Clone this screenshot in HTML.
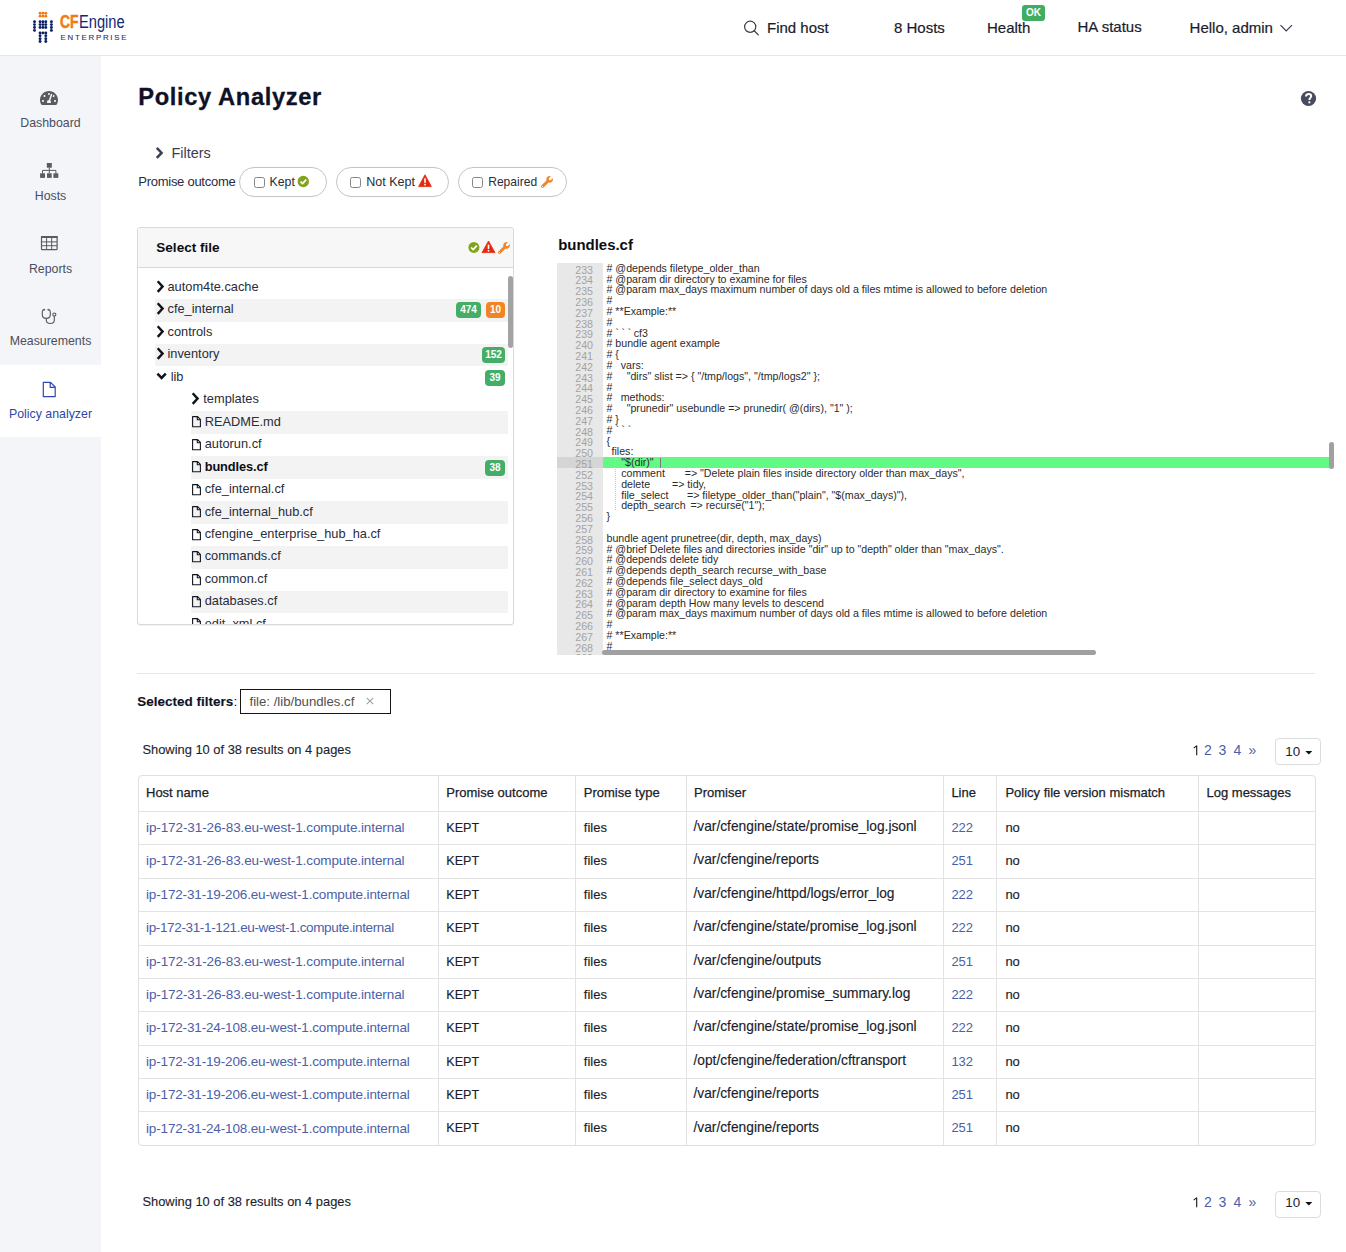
<!DOCTYPE html>
<html><head><meta charset="utf-8">
<style>
*{box-sizing:border-box;margin:0;padding:0}
html,body{width:1346px;height:1252px;overflow:hidden;background:#fff;font-family:"Liberation Sans",sans-serif;color:#1b1d2b}
.abs{position:absolute}
.t{position:absolute;line-height:1;white-space:pre}
.nav{color:#1a1c2c;-webkit-text-stroke:0.2px #1a1c2c}
.sl{color:#4b4e5e;width:101px;left:0!important;text-align:center}
.pill{position:absolute;top:167px;height:29.6px;border:1px solid #c4c4c4;border-radius:15px;background:#fff}
.cb{position:absolute;top:177px;width:11px;height:11px;border:1.2px solid #858585;border-radius:2.5px;background:#fff}
.row{position:absolute;height:22.46px}
.stripe{background:#f3f3f3}
.badge{position:absolute;height:16px;border-radius:4px;color:#fff;font-size:10px;font-weight:bold;text-align:center;line-height:16px}
.g{background:#44ae68}.o{background:#f28422}
.code .ln{position:absolute;width:36px;left:557px;text-align:right;color:#a3a3a3;font-size:10.64px;line-height:1;white-space:pre}
.code .cl{position:absolute;left:606.5px;color:#2b2b2b;font-size:10.64px;line-height:1;white-space:pre}
.th{color:#1b1d2b;-webkit-text-stroke:0.25px #1b1d2b}
.lnk{color:#4b5ea8}
.td{color:#1b1d2b;-webkit-text-stroke:0.15px #1b1d2b}
.vl{position:absolute;top:775px;width:1px;height:370px;background:#e3e3e3}
.hl{position:absolute;left:138px;width:1177px;height:1px;background:#e3e3e3}
</style></head><body>

<div class="abs" style="left:0;top:0;width:1346px;height:56px;background:#fff;border-bottom:1px solid #e3e6ed"></div>
<svg class="abs" style="left:0;top:0" width="60" height="50"><circle cx="40.06" cy="13.27" r="1.45" fill="#f37a12"/><circle cx="42.94" cy="13.27" r="1.45" fill="#f37a12"/><circle cx="45.8" cy="13.27" r="1.45" fill="#f37a12"/><circle cx="40.06" cy="16.15" r="1.45" fill="#f37a12"/><circle cx="42.94" cy="16.15" r="1.45" fill="#f37a12"/><circle cx="45.8" cy="16.15" r="1.45" fill="#f37a12"/><circle cx="40.06" cy="21.7" r="1.45" fill="#0b1f66"/><circle cx="42.94" cy="21.7" r="1.45" fill="#0b1f66"/><circle cx="45.8" cy="21.7" r="1.45" fill="#0b1f66"/><circle cx="40.06" cy="24.6" r="1.45" fill="#0b1f66"/><circle cx="42.94" cy="24.6" r="1.45" fill="#0b1f66"/><circle cx="45.8" cy="24.6" r="1.45" fill="#0b1f66"/><circle cx="40.06" cy="27.5" r="1.45" fill="#0b1f66"/><circle cx="42.94" cy="27.5" r="1.45" fill="#0b1f66"/><circle cx="45.8" cy="27.5" r="1.45" fill="#0b1f66"/><circle cx="34.5" cy="21.7" r="1.45" fill="#0b1f66"/><circle cx="51.4" cy="21.7" r="1.45" fill="#0b1f66"/><circle cx="34.5" cy="24.6" r="1.45" fill="#0b1f66"/><circle cx="51.4" cy="24.6" r="1.45" fill="#0b1f66"/><circle cx="34.5" cy="27.5" r="1.45" fill="#0b1f66"/><circle cx="51.4" cy="27.5" r="1.45" fill="#0b1f66"/><circle cx="34.5" cy="30.4" r="1.45" fill="#0b1f66"/><circle cx="51.4" cy="30.4" r="1.45" fill="#0b1f66"/><circle cx="40.06" cy="32.9" r="1.45" fill="#0b1f66"/><circle cx="42.94" cy="32.9" r="1.45" fill="#0b1f66"/><circle cx="45.8" cy="32.9" r="1.45" fill="#0b1f66"/><circle cx="40.06" cy="35.8" r="1.45" fill="#0b1f66"/><circle cx="45.8" cy="35.8" r="1.45" fill="#0b1f66"/><circle cx="40.06" cy="38.7" r="1.45" fill="#0b1f66"/><circle cx="45.8" cy="38.7" r="1.45" fill="#0b1f66"/><circle cx="40.06" cy="41.5" r="1.45" fill="#0b1f66"/><circle cx="45.8" cy="41.5" r="1.45" fill="#0b1f66"/></svg>
<div class="t" style="left:60px;top:13.4px;font-size:18px;color:#f37a12;font-weight:bold;-webkit-text-stroke:0.5px #f37a12;transform:scaleX(0.77);transform-origin:0 0">CF</div>
<div class="t" style="left:79.3px;top:13.4px;font-size:18px;color:#112a74;transform:scaleX(0.815);transform-origin:0 0">Engine</div>
<div class="t" style="left:60.6px;top:33.6px;font-size:7.8px;color:#1b2f72;-webkit-text-stroke:0.1px #1b2f72;letter-spacing:1.78px">ENTERPRISE</div>
<svg class="abs" style="left:743px;top:20px" width="17" height="16" viewBox="0 0 17 16"><circle cx="7.2" cy="6.8" r="5.6" fill="none" stroke="#3a3c4a" stroke-width="1.2"/><line x1="11.2" y1="10.8" x2="15.3" y2="14.9" stroke="#3a3c4a" stroke-width="1.3" stroke-linecap="round"/></svg>
<div class="t nav" style="left:767px;top:19.70px;font-size:15px;">Find host</div>
<div class="t nav" style="left:894px;top:19.70px;font-size:15px;">8 Hosts</div>
<div class="t nav" style="left:987px;top:19.70px;font-size:15px;">Health</div>
<div class="abs" style="left:1022px;top:5px;width:23px;height:16px;background:#3fae63;border-radius:3px;color:#fff;font-size:10px;font-weight:bold;text-align:center;line-height:16px">OK</div>
<div class="t nav" style="left:1077.5px;top:18.90px;font-size:15px;">HA status</div>
<div class="t nav" style="left:1189.6px;top:19.90px;font-size:15px;">Hello, admin</div>
<svg class="abs" style="left:1279px;top:23px" width="15" height="11" viewBox="0 0 15 11"><polyline points="1.5,2.2 7.2,8 13,2.2" fill="none" stroke="#3a3c4a" stroke-width="1.2"/></svg>
<div class="abs" style="left:0;top:56px;width:101px;height:1196px;background:#f3f5f9"></div>
<div class="abs" style="left:0;top:365px;width:101px;height:72px;background:#fff"></div>
<svg class="abs" style="left:40px;top:91px" width="18" height="14" viewBox="0 32 576 448">
<path fill="#5b5b5f" d="M288 32C128.94 32 0 160.94 0 320c0 52.8 14.25 102.26 39.06 144.8 5.61 9.62 16.3 15.2 27.44 15.2h443c11.14 0 21.83-5.58 27.44-15.2C561.75 422.26 576 372.8 576 320c0-159.06-128.94-288-288-288zm0 64c14.71 0 26.58 10.13 30.32 23.650-1.11 2.26-2.640 4.23-3.450 6.67l-9.22 27.67c-5.13 3.49-10.97 6.01-17.64 6.01-17.67 0-32-14.33-32-32S270.33 96 288 96zM96 384c-17.67 0-32-14.33-32-32s14.33-32 32-32 32 14.33 32 32-14.33 32-32 32zm48-160c-17.67 0-32-14.33-32-32s14.33-32 32-32 32 14.33 32 32-14.33 32-32 32zm246.77-72.41l-61.33 184C343.13 347.33 352 364.54 352 384c0 11.72-3.380 22.55-8.880 32H232.88c-5.5-9.45-8.88-20.28-8.88-32 0-33.94 26.5-61.43 59.9-63.59l61.34-184.01c4.17-12.56 17.73-19.45 30.36-15.170 12.57 4.19 19.35 17.79 15.17 30.36zm14.66 57.2l15.52-46.55c3.47-1.29 7.13-2.23 11.05-2.23 17.67 0 32 14.33 32 32s-14.33 32-32 32c-11.38-.01-20.89-6.27-26.57-15.22zM480 384c-17.67 0-32-14.33-32-32s14.33-32 32-32 32 14.33 32 32-14.33 32-32 32z"/>
</svg>
<div class="t sl" style="left:0px;top:116.85px;font-size:12.35px;">Dashboard</div>
<svg class="abs" style="left:39px;top:162px" width="21" height="17" viewBox="0 0 21 17">
<rect x="7.8" y="1" width="5" height="4.7" fill="#5b5b5f"/>
<rect x="1.1" y="11.3" width="4.9" height="4.6" fill="#5b5b5f"/><rect x="8" y="11.3" width="4.7" height="4.6" fill="#5b5b5f"/><rect x="14.4" y="11.3" width="4.9" height="4.6" fill="#5b5b5f"/>
<path d="M10.3,5.5 V11.5 M3.5,11.5 V8.4 H16.9 V11.5" fill="none" stroke="#5b5b5f" stroke-width="1"/>
</svg>
<div class="t sl" style="left:0px;top:189.95px;font-size:12.35px;">Hosts</div>
<svg class="abs" style="left:40px;top:235px" width="19" height="16" viewBox="0 0 19 16">
<rect x="1.5" y="1.5" width="15.6" height="13.2" rx="0.8" fill="none" stroke="#5b5b5f" stroke-width="1.2"/>
<rect x="1" y="1" width="16.6" height="2" fill="#5b5b5f"/>
<path d="M6.6,2 V14.5 M11.7,2 V14.5 M1.5,6.9 H17 M1.5,10.7 H17" stroke="#5b5b5f" stroke-width="1"/>
</svg>
<div class="t sl" style="left:0px;top:262.65px;font-size:12.35px;">Reports</div>
<svg class="abs" style="left:40px;top:308px" width="19" height="18" viewBox="0 0 19 18">
<path d="M4.2,1.6 Q2.3,1.8 2.3,3.8 V6.8 Q2.3,10.4 6.3,10.4 Q10.3,10.4 10.3,6.8 V3.8 Q10.3,1.8 8.4,1.6" fill="none" stroke="#5b5b5f" stroke-width="1.15"/>
<circle cx="4.3" cy="1.7" r="0.9" fill="#5b5b5f"/><circle cx="8.3" cy="1.7" r="0.9" fill="#5b5b5f"/>
<path d="M6.3,10.4 V12.3 Q6.3,15.5 10.3,15.5 Q14.3,15.5 14.3,12.3 V8.1" fill="none" stroke="#5b5b5f" stroke-width="1.15"/>
<circle cx="14.3" cy="6.5" r="1.55" fill="none" stroke="#5b5b5f" stroke-width="1.15"/>
</svg>
<div class="t sl" style="left:0px;top:335.45px;font-size:12.35px;">Measurements</div>
<svg class="abs" style="left:42px;top:381px" width="15" height="17" viewBox="0 0 15 17">
<path d="M1.3,1.3 H8.5 L13.2,6 V15.6 H1.3 Z M8.2,1.3 V6.3 H13.2" fill="none" stroke="#2f48ad" stroke-width="1.2" stroke-linejoin="round"/>
</svg>
<div class="t sl" style="left:0px;top:408.45px;font-size:12.35px;color:#2d47ab">Policy analyzer</div>
<div class="t" style="left:138.3px;top:85.94px;font-size:23.7px;font-weight:bold;color:#0f1226;letter-spacing:0.62px;-webkit-text-stroke:0.3px #0f1226">Policy Analyzer</div>
<svg class="abs" style="left:1300px;top:90px" width="17" height="17" viewBox="0 0 17 17">
<circle cx="8.5" cy="8.5" r="7.6" fill="#474b5b"/>
<path d="M6,6.5 C6,4.7 7.1,3.9 8.6,3.9 C10.2,3.9 11.2,4.8 11.2,6.1 C11.2,7.7 9.4,8 9.4,9.6 V10.1" fill="none" stroke="#fff" stroke-width="2"/>
<rect x="8.4" y="11.3" width="1.9" height="2" fill="#fff"/>
</svg>
<svg class="abs" style="left:154px;top:146px" width="11" height="14" viewBox="0 0 11 14"><polyline points="2.8,1.9 7.6,6.9 2.8,11.9" fill="none" stroke="#3c4050" stroke-width="2.5"/></svg>
<div class="t" style="left:171.5px;top:145.81px;font-size:14.4px;color:#3a3d4e">Filters</div>
<div class="t" style="left:138.3px;top:174.80px;font-size:13px;color:#2a2c3c;letter-spacing:-0.27px">Promise outcome</div>
<div class="pill" style="left:239px;width:88px"></div>
<div class="cb" style="left:254px"></div>
<div class="t" style="left:269.5px;top:176.09px;font-size:12.3px;color:#2a2c3c">Kept</div>
<svg class="abs" style="left:297px;top:175px" width="13" height="13" viewBox="0 0 13 13"><circle cx="6.3" cy="6.5" r="5.7" fill="#80a51a"/><polyline points="3.5,6.6 5.6,8.6 9.2,4.7" fill="none" stroke="#fff" stroke-width="1.7"/></svg>
<div class="pill" style="left:336px;width:113px"></div>
<div class="cb" style="left:350px"></div>
<div class="t" style="left:366.2px;top:175.88px;font-size:12.55px;color:#2a2c3c">Not Kept</div>
<svg class="abs" style="left:418px;top:174px" width="14" height="14" viewBox="0 0 14 14"><path d="M7,0.8 L13.4,12.6 H0.6 Z" fill="#e5290f" stroke="#e5290f" stroke-width="0.8" stroke-linejoin="round"/><rect x="6.2" y="4.3" width="1.6" height="4.5" fill="#fff"/><rect x="6.2" y="9.8" width="1.6" height="1.6" fill="#fff"/></svg>
<div class="pill" style="left:458px;width:109px"></div>
<div class="cb" style="left:472px"></div>
<div class="t" style="left:488.2px;top:176.30px;font-size:12.05px;color:#2a2c3c">Repaired</div>
<svg class="abs" style="left:541px;top:175.7px" width="12" height="12" viewBox="0 0 512 512"><path fill="#f0862a" d="M507.73 109.1c-2.24-9.03-13.54-12.09-20.12-5.51l-74.36 74.360-67.88-11.310-11.310-67.88 74.36-74.36c6.62-6.62 3.43-17.9-5.66-20.16-47.38-11.74-99.55.91-136.58 37.93-39.64 39.640-50.55 97.1-34.05 147.2L18.74 402.76c-24.99 24.99-24.99 65.51 0 90.5 24.99 24.99 65.51 24.99 90.5 0l213.21-213.21c50.12 16.71 107.47 5.68 147.37-34.22 37.07-37.07 49.7-89.32 37.91-136.73zM64 472c-13.25 0-24-10.75-24-24 0-13.26 10.75-24 24-24s24 10.74 24 24c0 13.25-10.75 24-24 24z"/></svg>
<div class="abs" style="left:137px;top:227px;width:377px;height:398px;border:1px solid #d9d9d9;border-radius:3px;background:#fff;box-shadow:0 1px 1px rgba(0,0,0,0.06)"></div>
<div class="abs" style="left:138px;top:228px;width:375px;height:40px;background:#f7f7f7;border-bottom:1px solid #d9d9d9;border-radius:3px 3px 0 0"></div>
<div class="t" style="left:156.3px;top:240.53px;font-size:13.55px;font-weight:bold;color:#0d0d12">Select file</div>
<svg class="abs" style="left:467px;top:241px" width="13" height="13" viewBox="0 0 13 13"><circle cx="6.9" cy="6.4" r="5.5" fill="#80a51a"/><polyline points="4.1,6.5 6.2,8.5 9.8,4.6" fill="none" stroke="#fff" stroke-width="1.7"/></svg>
<svg class="abs" style="left:481px;top:240px" width="15" height="14" viewBox="0 0 15 14"><path d="M7.5,1 L14,12.6 H1 Z" fill="#e5290f" stroke="#e5290f" stroke-width="0.8" stroke-linejoin="round"/><rect x="6.7" y="4.6" width="1.6" height="4.3" fill="#fff"/><rect x="6.7" y="9.9" width="1.6" height="1.6" fill="#fff"/></svg>
<svg class="abs" style="left:497.5px;top:241.5px" width="12" height="12" viewBox="0 0 512 512"><path fill="#f0862a" d="M507.73 109.1c-2.24-9.03-13.54-12.09-20.12-5.51l-74.36 74.360-67.88-11.310-11.310-67.88 74.36-74.36c6.62-6.62 3.43-17.9-5.66-20.16-47.38-11.74-99.55.91-136.58 37.93-39.64 39.640-50.55 97.1-34.05 147.2L18.74 402.76c-24.99 24.99-24.99 65.51 0 90.5 24.99 24.99 65.51 24.99 90.5 0l213.21-213.21c50.12 16.71 107.47 5.68 147.37-34.22 37.07-37.07 49.7-89.32 37.91-136.73zM64 472c-13.25 0-24-10.75-24-24 0-13.26 10.75-24 24-24s24 10.74 24 24c0 13.25-10.75 24-24 24z"/></svg>
<div class="abs" style="left:138px;top:269px;width:375px;height:355px;overflow:hidden">
<svg class="abs" style="left:17.5px;top:10.85px" width="9" height="14" viewBox="0 0 9 14"><polyline points="1.7,1.3 6.6,6.6 1.7,11.9" fill="none" stroke="#10121c" stroke-width="2.4"/></svg>
<div class="t" style="left:29.5px;top:12.01px;font-size:12.8px;color:#2a2c38">autom4te.cache</div>
<div class="abs stripe" style="left:17.19999999999999px;top:30.00px;width:352.8px;height:22.6px"></div>
<svg class="abs" style="left:17.5px;top:33.30px" width="9" height="14" viewBox="0 0 9 14"><polyline points="1.7,1.3 6.6,6.6 1.7,11.9" fill="none" stroke="#10121c" stroke-width="2.4"/></svg>
<div class="t" style="left:29.5px;top:34.46px;font-size:12.8px;color:#2a2c38">cfe_internal</div>
<div class="badge g" style="left:318px;top:33.40px;width:25px">474</div>
<div class="badge o" style="left:348px;top:33.40px;width:19px">10</div>
<svg class="abs" style="left:17.5px;top:55.75px" width="9" height="14" viewBox="0 0 9 14"><polyline points="1.7,1.3 6.6,6.6 1.7,11.9" fill="none" stroke="#10121c" stroke-width="2.4"/></svg>
<div class="t" style="left:29.5px;top:56.91px;font-size:12.8px;color:#2a2c38">controls</div>
<div class="abs stripe" style="left:17.19999999999999px;top:74.90px;width:352.8px;height:22.6px"></div>
<svg class="abs" style="left:17.5px;top:78.20px" width="9" height="14" viewBox="0 0 9 14"><polyline points="1.7,1.3 6.6,6.6 1.7,11.9" fill="none" stroke="#10121c" stroke-width="2.4"/></svg>
<div class="t" style="left:29.5px;top:79.36px;font-size:12.8px;color:#2a2c38">inventory</div>
<div class="badge g" style="left:344px;top:78.30px;width:23px">152</div>
<svg class="abs" style="left:18px;top:103.45px" width="12" height="9" viewBox="0 0 12 9"><polyline points="1.4,1.6 5.6,5.9 9.8,1.6" fill="none" stroke="#10121c" stroke-width="2.5"/></svg>
<div class="t" style="left:32.69999999999999px;top:101.81px;font-size:12.8px;color:#2a2c38">lib</div>
<div class="badge g" style="left:347px;top:100.75px;width:20px">39</div>
<svg class="abs" style="left:53.30000000000001px;top:123.10px" width="9" height="14" viewBox="0 0 9 14"><polyline points="1.7,1.3 6.6,6.6 1.7,11.9" fill="none" stroke="#10121c" stroke-width="2.4"/></svg>
<div class="t" style="left:65.30000000000001px;top:124.26px;font-size:12.8px;color:#2a2c38">templates</div>
<div class="abs stripe" style="left:53px;top:142.25px;width:317px;height:22.6px"></div>
<svg class="abs" style="left:53.80000000000001px;top:147.35px" width="10" height="12" viewBox="0 0 10 12"><path d="M0.6,0.6 H5.6 L8.4,3.4 V10.8 H0.6 Z M5.3,0.6 V3.7 H8.4" fill="none" stroke="#14161f" stroke-width="1.1" stroke-linejoin="round"/></svg>
<div class="t" style="left:66.69999999999999px;top:146.71px;font-size:12.8px;color:#2a2c38">README.md</div>
<svg class="abs" style="left:53.80000000000001px;top:169.80px" width="10" height="12" viewBox="0 0 10 12"><path d="M0.6,0.6 H5.6 L8.4,3.4 V10.8 H0.6 Z M5.3,0.6 V3.7 H8.4" fill="none" stroke="#14161f" stroke-width="1.1" stroke-linejoin="round"/></svg>
<div class="t" style="left:66.69999999999999px;top:169.16px;font-size:12.8px;color:#2a2c38">autorun.cf</div>
<div class="abs stripe" style="left:53px;top:187.15px;width:317px;height:22.6px"></div>
<svg class="abs" style="left:53.80000000000001px;top:192.25px" width="10" height="12" viewBox="0 0 10 12"><path d="M0.6,0.6 H5.6 L8.4,3.4 V10.8 H0.6 Z M5.3,0.6 V3.7 H8.4" fill="none" stroke="#14161f" stroke-width="1.1" stroke-linejoin="round"/></svg>
<div class="t" style="left:66.69999999999999px;top:191.61px;font-size:12.8px;font-weight:bold;color:#0d0d12;letter-spacing:-0.1px">bundles.cf</div>
<div class="badge g" style="left:347px;top:190.55px;width:20px">38</div>
<svg class="abs" style="left:53.80000000000001px;top:214.70px" width="10" height="12" viewBox="0 0 10 12"><path d="M0.6,0.6 H5.6 L8.4,3.4 V10.8 H0.6 Z M5.3,0.6 V3.7 H8.4" fill="none" stroke="#14161f" stroke-width="1.1" stroke-linejoin="round"/></svg>
<div class="t" style="left:66.69999999999999px;top:214.06px;font-size:12.8px;color:#2a2c38">cfe_internal.cf</div>
<div class="abs stripe" style="left:53px;top:232.05px;width:317px;height:22.6px"></div>
<svg class="abs" style="left:53.80000000000001px;top:237.15px" width="10" height="12" viewBox="0 0 10 12"><path d="M0.6,0.6 H5.6 L8.4,3.4 V10.8 H0.6 Z M5.3,0.6 V3.7 H8.4" fill="none" stroke="#14161f" stroke-width="1.1" stroke-linejoin="round"/></svg>
<div class="t" style="left:66.69999999999999px;top:236.51px;font-size:12.8px;color:#2a2c38">cfe_internal_hub.cf</div>
<svg class="abs" style="left:53.80000000000001px;top:259.60px" width="10" height="12" viewBox="0 0 10 12"><path d="M0.6,0.6 H5.6 L8.4,3.4 V10.8 H0.6 Z M5.3,0.6 V3.7 H8.4" fill="none" stroke="#14161f" stroke-width="1.1" stroke-linejoin="round"/></svg>
<div class="t" style="left:66.69999999999999px;top:258.96px;font-size:12.8px;color:#2a2c38">cfengine_enterprise_hub_ha.cf</div>
<div class="abs stripe" style="left:53px;top:276.95px;width:317px;height:22.6px"></div>
<svg class="abs" style="left:53.80000000000001px;top:282.05px" width="10" height="12" viewBox="0 0 10 12"><path d="M0.6,0.6 H5.6 L8.4,3.4 V10.8 H0.6 Z M5.3,0.6 V3.7 H8.4" fill="none" stroke="#14161f" stroke-width="1.1" stroke-linejoin="round"/></svg>
<div class="t" style="left:66.69999999999999px;top:281.41px;font-size:12.8px;color:#2a2c38">commands.cf</div>
<svg class="abs" style="left:53.80000000000001px;top:304.50px" width="10" height="12" viewBox="0 0 10 12"><path d="M0.6,0.6 H5.6 L8.4,3.4 V10.8 H0.6 Z M5.3,0.6 V3.7 H8.4" fill="none" stroke="#14161f" stroke-width="1.1" stroke-linejoin="round"/></svg>
<div class="t" style="left:66.69999999999999px;top:303.86px;font-size:12.8px;color:#2a2c38">common.cf</div>
<div class="abs stripe" style="left:53px;top:321.85px;width:317px;height:22.6px"></div>
<svg class="abs" style="left:53.80000000000001px;top:326.95px" width="10" height="12" viewBox="0 0 10 12"><path d="M0.6,0.6 H5.6 L8.4,3.4 V10.8 H0.6 Z M5.3,0.6 V3.7 H8.4" fill="none" stroke="#14161f" stroke-width="1.1" stroke-linejoin="round"/></svg>
<div class="t" style="left:66.69999999999999px;top:326.31px;font-size:12.8px;color:#2a2c38">databases.cf</div>
<svg class="abs" style="left:53.80000000000001px;top:349.40px" width="10" height="12" viewBox="0 0 10 12"><path d="M0.6,0.6 H5.6 L8.4,3.4 V10.8 H0.6 Z M5.3,0.6 V3.7 H8.4" fill="none" stroke="#14161f" stroke-width="1.1" stroke-linejoin="round"/></svg>
<div class="t" style="left:66.69999999999999px;top:348.76px;font-size:12.8px;color:#2a2c38">edit_xml.cf</div>
<div class="abs" style="left:370px;top:7px;width:4.5px;height:72px;border-radius:3px;background:#a3a3a3"></div>
</div>
<div class="t" style="left:558.2px;top:237.94px;font-size:14.95px;font-weight:bold;color:#0d0d12">bundles.cf</div>
<div class="abs code" style="left:0;top:0;width:1346px;height:1252px;overflow:hidden;clip-path:inset(263px 11px 597px 557px)">
<div class="abs" style="left:557px;top:263px;width:46px;height:392px;background:#e8e8e8"></div>
<div class="abs" style="left:557px;top:457.2px;width:46px;height:10.6px;background:#d5d5d5"></div>
<div class="abs" style="left:603px;top:457.2px;width:727px;height:10.6px;background:#62f985"></div>
<div class="ln" style="top:264.59px">233</div>
<div class="cl" style="top:262.79px"># @depends filetype_older_than</div>
<div class="ln" style="top:275.39px">234</div>
<div class="cl" style="top:273.59px"># @param dir directory to examine for files</div>
<div class="ln" style="top:286.19px">235</div>
<div class="cl" style="top:284.39px"># @param max_days maximum number of days old a files mtime is allowed to before deletion</div>
<div class="ln" style="top:296.99px">236</div>
<div class="cl" style="top:295.19px">#</div>
<div class="ln" style="top:307.79px">237</div>
<div class="cl" style="top:305.99px"># **Example:**</div>
<div class="ln" style="top:318.59px">238</div>
<div class="cl" style="top:316.79px">#</div>
<div class="ln" style="top:329.39px">239</div>
<div class="cl" style="top:327.59px"># <span style="letter-spacing:2.6px">```</span>cf3</div>
<div class="ln" style="top:340.19px">240</div>
<div class="cl" style="top:338.39px"># bundle agent example</div>
<div class="ln" style="top:350.99px">241</div>
<div class="cl" style="top:349.19px"># {</div>
<div class="ln" style="top:361.79px">242</div>
<div class="cl" style="top:359.99px">#</div><div class="cl" style="left:620.7px;top:359.99px">vars:</div>
<div class="ln" style="top:372.59px">243</div>
<div class="cl" style="top:370.79px">#</div><div class="cl" style="left:626.7px;top:370.79px">&quot;dirs&quot; slist =&gt; { &quot;/tmp/logs&quot;, &quot;/tmp/logs2&quot; };</div>
<div class="ln" style="top:383.39px">244</div>
<div class="cl" style="top:381.59px">#</div>
<div class="ln" style="top:394.19px">245</div>
<div class="cl" style="top:392.39px">#</div><div class="cl" style="left:620.7px;top:392.39px">methods:</div>
<div class="ln" style="top:404.99px">246</div>
<div class="cl" style="top:403.19px">#</div><div class="cl" style="left:626.7px;top:403.19px">&quot;prunedir&quot; usebundle =&gt; prunedir( @(dirs), &quot;1&quot; );</div>
<div class="ln" style="top:415.79px">247</div>
<div class="cl" style="top:413.99px"># }</div>
<div class="ln" style="top:426.59px">248</div>
<div class="cl" style="top:424.79px"># <span style="letter-spacing:2.6px">```</span></div>
<div class="ln" style="top:437.39px">249</div>
<div class="cl" style="top:435.59px">{</div>
<div class="ln" style="top:448.19px">250</div>
<div class="cl" style="left:611.5px;top:446.39px">files:</div>
<div class="ln" style="top:458.99px">251</div>
<div class="cl" style="left:621.3px;top:457.19px">"$(dir)"</div>
<div class="abs" style="left:660px;top:457.6px;width:1px;height:10px;background:#7a7a7a"></div>
<div class="ln" style="top:469.79px">252</div>
<div class="cl" style="left:621.2px;top:467.99px">comment</div>
<div class="cl" style="left:684.7px;top:467.99px">=&gt; &quot;Delete plain files inside directory older than max_days&quot;,</div>
<div class="ln" style="top:480.59px">253</div>
<div class="cl" style="left:621.2px;top:478.79px">delete</div>
<div class="cl" style="left:672px;top:478.79px">=&gt; tidy,</div>
<div class="ln" style="top:491.39px">254</div>
<div class="cl" style="left:621.2px;top:489.59px">file_select</div>
<div class="cl" style="left:687px;top:489.59px">=&gt; filetype_older_than(&quot;plain&quot;, &quot;$(max_days)&quot;),</div>
<div class="ln" style="top:502.19px">255</div>
<div class="cl" style="left:621.2px;top:500.39px">depth_search</div>
<div class="cl" style="left:690.4px;top:500.39px">=&gt; recurse(&quot;1&quot;);</div>
<div class="ln" style="top:512.99px">256</div>
<div class="cl" style="top:511.19px">}</div>
<div class="ln" style="top:523.79px">257</div>
<div class="ln" style="top:534.59px">258</div>
<div class="cl" style="top:532.79px">bundle agent prunetree(dir, depth, max_days)</div>
<div class="ln" style="top:545.39px">259</div>
<div class="cl" style="top:543.59px"># @brief Delete files and directories inside &quot;dir&quot; up to &quot;depth&quot; older than &quot;max_days&quot;.</div>
<div class="ln" style="top:556.19px">260</div>
<div class="cl" style="top:554.39px"># @depends delete tidy</div>
<div class="ln" style="top:566.99px">261</div>
<div class="cl" style="top:565.19px"># @depends depth_search recurse_with_base</div>
<div class="ln" style="top:577.79px">262</div>
<div class="cl" style="top:575.99px"># @depends file_select days_old</div>
<div class="ln" style="top:588.59px">263</div>
<div class="cl" style="top:586.79px"># @param dir directory to examine for files</div>
<div class="ln" style="top:599.39px">264</div>
<div class="cl" style="top:597.59px"># @param depth How many levels to descend</div>
<div class="ln" style="top:610.19px">265</div>
<div class="cl" style="top:608.39px"># @param max_days maximum number of days old a files mtime is allowed to before deletion</div>
<div class="ln" style="top:620.99px">266</div>
<div class="cl" style="top:619.19px">#</div>
<div class="ln" style="top:631.79px">267</div>
<div class="cl" style="top:629.99px"># **Example:**</div>
<div class="ln" style="top:642.59px">268</div>
<div class="cl" style="top:640.79px">#</div>
<div class="ln" style="top:653.39px">269</div>
<div class="cl" style="top:651.59px">#</div>
<div class="abs" style="left:615px;top:457px;width:0;height:53px;border-left:1px dotted #c8c8c8"></div>
<div class="abs" style="left:1328.7px;top:442px;width:5px;height:27px;border-radius:3px;background:#a0a0a0"></div>
<div class="abs" style="left:602px;top:650.4px;width:494px;height:4.6px;border-radius:3px;background:#a0a0a0"></div>
</div>
<div class="abs" style="left:137px;top:673px;width:1178px;height:1px;background:#e6e6e6"></div>
<div class="t" style="left:137.3px;top:694.67px;font-size:13.5px;font-weight:bold;color:#0f1226;-webkit-text-stroke:0.1px #0f1226">Selected filters</div>
<div class="t" style="left:233.5px;top:694.67px;font-size:13.5px;color:#0f1226">:</div>
<div class="abs" style="left:240px;top:689px;width:151px;height:25px;border:1px solid #151515"></div>
<div class="t" style="left:249.5px;top:694.83px;font-size:13.2px;color:#505050">file: /lib/bundles.cf</div>
<svg class="abs" style="left:365.5px;top:697px" width="8" height="8" viewBox="0 0 8 8"><path d="M0.8,0.8 L7.2,7.2 M7.2,0.8 L0.8,7.2" stroke="#a0a0a0" stroke-width="1.1"/></svg>
<div class="t" style="left:142.4px;top:743.78px;font-size:12.9px;color:#1b1d2b;-webkit-text-stroke:0.1px #1b1d2b">Showing 10 of 38 results on 4 pages</div>
<svg class="abs" style="left:1192.5px;top:744.80px" width="6" height="11" viewBox="0 0 6 11"><path d="M3.7,0.4 V10.2 M3.8,0.6 L0.7,3.1" fill="none" stroke="#1b1d2b" stroke-width="1.15"/></svg>
<div class="t" style="left:1204px;top:743.15px;font-size:14px;color:#4b5ea8">2</div>
<div class="t" style="left:1218.4px;top:743.15px;font-size:14px;color:#4b5ea8">3</div>
<div class="t" style="left:1233.5px;top:743.15px;font-size:14px;color:#4b5ea8">4</div>
<div class="t" style="left:1248.5px;top:743.15px;font-size:14px;color:#4b5ea8">»</div>
<div class="abs" style="left:1274.5px;top:738.4px;width:46px;height:26.5px;border:1px solid #dcdcdc;border-radius:4px"></div>
<div class="t" style="left:1285.2px;top:744.56px;font-size:13.4px;color:#1b1d2b">10</div>
<svg class="abs" style="left:1305px;top:750.5px" width="8" height="4" viewBox="0 0 8 4"><path d="M0.3,0 H7.3 L3.8,3.6 Z" fill="#111"/></svg>
<div class="abs" style="left:137.5px;top:774.5px;width:1178px;height:371px;border:1px solid #e0e0e0;border-radius:4px"></div>
<div class="vl" style="left:438.0px"></div>
<div class="vl" style="left:574.8px"></div>
<div class="vl" style="left:685.8px"></div>
<div class="vl" style="left:943.2px"></div>
<div class="vl" style="left:996.2px"></div>
<div class="vl" style="left:1198.0px"></div>
<div class="hl" style="top:811.0px"></div>
<div class="hl" style="top:844.3px"></div>
<div class="hl" style="top:877.7px"></div>
<div class="hl" style="top:911.0px"></div>
<div class="hl" style="top:944.9px"></div>
<div class="hl" style="top:978.1px"></div>
<div class="hl" style="top:1011.3px"></div>
<div class="hl" style="top:1044.9px"></div>
<div class="hl" style="top:1078.2px"></div>
<div class="hl" style="top:1111.4px"></div>
<div class="t th" style="left:146px;top:786.20px;font-size:13px;">Host name</div>
<div class="t th" style="left:446.3px;top:786.20px;font-size:13px;">Promise outcome</div>
<div class="t th" style="left:583.8px;top:786.20px;font-size:13px;">Promise type</div>
<div class="t th" style="left:694px;top:786.20px;font-size:13px;">Promiser</div>
<div class="t th" style="left:951.4px;top:786.20px;font-size:13px;">Line</div>
<div class="t th" style="left:1005.4px;top:786.20px;font-size:13px;">Policy file version mismatch</div>
<div class="t th" style="left:1206.5px;top:786.20px;font-size:13px;">Log messages</div>
<div class="t" style="left:146px;top:821.17px;font-size:13.5px;color:#4b5ea8;letter-spacing:-0.1px">ip-172-31-26-83.eu-west-1.compute.internal</div>
<div class="t td" style="left:446.3px;top:821.93px;font-size:12.6px;">KEPT</div>
<div class="t td" style="left:583.8px;top:820.80px;font-size:13px;">files</div>
<div class="t td" style="left:693.5px;top:820.16px;font-size:13.75px;">/var/cfengine/state/promise_log.jsonl</div>
<div class="t" style="left:951.4px;top:820.80px;font-size:13px;color:#4b5ea8">222</div>
<div class="t td" style="left:1005.4px;top:820.80px;font-size:13px;">no</div>
<div class="t" style="left:146px;top:854.47px;font-size:13.5px;color:#4b5ea8;letter-spacing:-0.1px">ip-172-31-26-83.eu-west-1.compute.internal</div>
<div class="t td" style="left:446.3px;top:855.23px;font-size:12.6px;">KEPT</div>
<div class="t td" style="left:583.8px;top:854.10px;font-size:13px;">files</div>
<div class="t td" style="left:693.5px;top:853.46px;font-size:13.75px;">/var/cfengine/reports</div>
<div class="t" style="left:951.4px;top:854.10px;font-size:13px;color:#4b5ea8">251</div>
<div class="t td" style="left:1005.4px;top:854.10px;font-size:13px;">no</div>
<div class="t" style="left:146px;top:887.87px;font-size:13.5px;color:#4b5ea8;letter-spacing:-0.152px">ip-172-31-19-206.eu-west-1.compute.internal</div>
<div class="t td" style="left:446.3px;top:888.63px;font-size:12.6px;">KEPT</div>
<div class="t td" style="left:583.8px;top:887.50px;font-size:13px;">files</div>
<div class="t td" style="left:693.5px;top:886.86px;font-size:13.75px;">/var/cfengine/httpd/logs/error_log</div>
<div class="t" style="left:951.4px;top:887.50px;font-size:13px;color:#4b5ea8">222</div>
<div class="t td" style="left:1005.4px;top:887.50px;font-size:13px;">no</div>
<div class="t" style="left:146px;top:921.17px;font-size:13.5px;color:#4b5ea8;letter-spacing:-0.354px">ip-172-31-1-121.eu-west-1.compute.internal</div>
<div class="t td" style="left:446.3px;top:921.93px;font-size:12.6px;">KEPT</div>
<div class="t td" style="left:583.8px;top:920.80px;font-size:13px;">files</div>
<div class="t td" style="left:693.5px;top:920.16px;font-size:13.75px;">/var/cfengine/state/promise_log.jsonl</div>
<div class="t" style="left:951.4px;top:920.80px;font-size:13px;color:#4b5ea8">222</div>
<div class="t td" style="left:1005.4px;top:920.80px;font-size:13px;">no</div>
<div class="t" style="left:146px;top:955.07px;font-size:13.5px;color:#4b5ea8;letter-spacing:-0.1px">ip-172-31-26-83.eu-west-1.compute.internal</div>
<div class="t td" style="left:446.3px;top:955.83px;font-size:12.6px;">KEPT</div>
<div class="t td" style="left:583.8px;top:954.70px;font-size:13px;">files</div>
<div class="t td" style="left:693.5px;top:954.06px;font-size:13.75px;">/var/cfengine/outputs</div>
<div class="t" style="left:951.4px;top:954.70px;font-size:13px;color:#4b5ea8">251</div>
<div class="t td" style="left:1005.4px;top:954.70px;font-size:13px;">no</div>
<div class="t" style="left:146px;top:988.27px;font-size:13.5px;color:#4b5ea8;letter-spacing:-0.1px">ip-172-31-26-83.eu-west-1.compute.internal</div>
<div class="t td" style="left:446.3px;top:989.03px;font-size:12.6px;">KEPT</div>
<div class="t td" style="left:583.8px;top:987.90px;font-size:13px;">files</div>
<div class="t td" style="left:693.5px;top:987.26px;font-size:13.75px;">/var/cfengine/promise_summary.log</div>
<div class="t" style="left:951.4px;top:987.90px;font-size:13px;color:#4b5ea8">222</div>
<div class="t td" style="left:1005.4px;top:987.90px;font-size:13px;">no</div>
<div class="t" style="left:146px;top:1021.47px;font-size:13.5px;color:#4b5ea8;letter-spacing:-0.152px">ip-172-31-24-108.eu-west-1.compute.internal</div>
<div class="t td" style="left:446.3px;top:1022.23px;font-size:12.6px;">KEPT</div>
<div class="t td" style="left:583.8px;top:1021.10px;font-size:13px;">files</div>
<div class="t td" style="left:693.5px;top:1020.46px;font-size:13.75px;">/var/cfengine/state/promise_log.jsonl</div>
<div class="t" style="left:951.4px;top:1021.10px;font-size:13px;color:#4b5ea8">222</div>
<div class="t td" style="left:1005.4px;top:1021.10px;font-size:13px;">no</div>
<div class="t" style="left:146px;top:1055.07px;font-size:13.5px;color:#4b5ea8;letter-spacing:-0.152px">ip-172-31-19-206.eu-west-1.compute.internal</div>
<div class="t td" style="left:446.3px;top:1055.83px;font-size:12.6px;">KEPT</div>
<div class="t td" style="left:583.8px;top:1054.70px;font-size:13px;">files</div>
<div class="t td" style="left:693.5px;top:1054.06px;font-size:13.75px;">/opt/cfengine/federation/cftransport</div>
<div class="t" style="left:951.4px;top:1054.70px;font-size:13px;color:#4b5ea8">132</div>
<div class="t td" style="left:1005.4px;top:1054.70px;font-size:13px;">no</div>
<div class="t" style="left:146px;top:1088.37px;font-size:13.5px;color:#4b5ea8;letter-spacing:-0.152px">ip-172-31-19-206.eu-west-1.compute.internal</div>
<div class="t td" style="left:446.3px;top:1089.13px;font-size:12.6px;">KEPT</div>
<div class="t td" style="left:583.8px;top:1088.00px;font-size:13px;">files</div>
<div class="t td" style="left:693.5px;top:1087.36px;font-size:13.75px;">/var/cfengine/reports</div>
<div class="t" style="left:951.4px;top:1088.00px;font-size:13px;color:#4b5ea8">251</div>
<div class="t td" style="left:1005.4px;top:1088.00px;font-size:13px;">no</div>
<div class="t" style="left:146px;top:1121.57px;font-size:13.5px;color:#4b5ea8;letter-spacing:-0.152px">ip-172-31-24-108.eu-west-1.compute.internal</div>
<div class="t td" style="left:446.3px;top:1122.33px;font-size:12.6px;">KEPT</div>
<div class="t td" style="left:583.8px;top:1121.20px;font-size:13px;">files</div>
<div class="t td" style="left:693.5px;top:1120.56px;font-size:13.75px;">/var/cfengine/reports</div>
<div class="t" style="left:951.4px;top:1121.20px;font-size:13px;color:#4b5ea8">251</div>
<div class="t td" style="left:1005.4px;top:1121.20px;font-size:13px;">no</div>
<div class="t" style="left:142.4px;top:1196.38px;font-size:12.9px;color:#1b1d2b;-webkit-text-stroke:0.1px #1b1d2b">Showing 10 of 38 results on 4 pages</div>
<svg class="abs" style="left:1192.5px;top:1196.50px" width="6" height="11" viewBox="0 0 6 11"><path d="M3.7,0.4 V10.2 M3.8,0.6 L0.7,3.1" fill="none" stroke="#1b1d2b" stroke-width="1.15"/></svg>
<div class="t" style="left:1204px;top:1194.85px;font-size:14px;color:#4b5ea8">2</div>
<div class="t" style="left:1218.4px;top:1194.85px;font-size:14px;color:#4b5ea8">3</div>
<div class="t" style="left:1233.5px;top:1194.85px;font-size:14px;color:#4b5ea8">4</div>
<div class="t" style="left:1248.5px;top:1194.85px;font-size:14px;color:#4b5ea8">»</div>
<div class="abs" style="left:1274.5px;top:1191.3px;width:46px;height:26.8px;border:1px solid #dcdcdc;border-radius:4px"></div>
<div class="t" style="left:1285.2px;top:1196.26px;font-size:13.4px;color:#1b1d2b">10</div>
<svg class="abs" style="left:1305px;top:1202.2px" width="8" height="4" viewBox="0 0 8 4"><path d="M0.3,0 H7.3 L3.8,3.6 Z" fill="#111"/></svg>
</body></html>
